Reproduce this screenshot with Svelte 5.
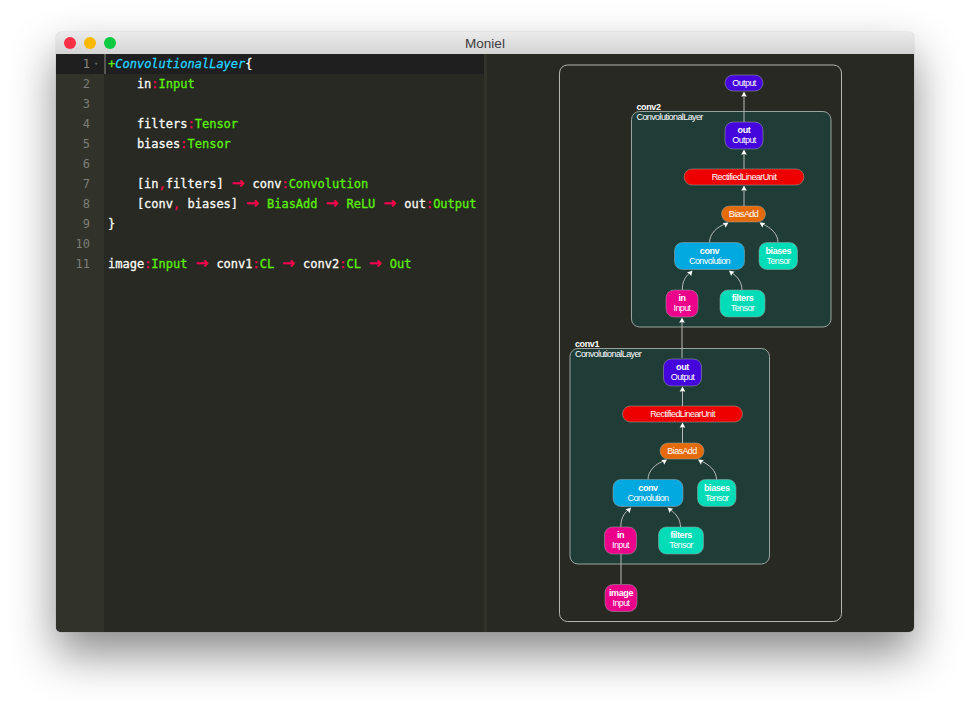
<script>
  const lines = [
    [['p','+'],['t','ConvolutionalLayer'],['w','{']],
    [['w','    in'],['r',':'],['g','Input']],
    [],
    [['w','    filters'],['r',':'],['g','Tensor']],
    [['w','    biases'],['r',':'],['g','Tensor']],
    [],
    [['w','    [in'],['r',','],['w','filters] '],['a','→'],['w',' conv'],['r',':'],['g','Convolution']],
    [['w','    [conv'],['r',','],['w',' biases] '],['a','→'],['g',' BiasAdd '],['a','→'],['g',' ReLU '],['a','→'],['w',' out'],['r',':'],['g','Output']],
    [['w','}']],
    [],
    [['w','image'],['r',':'],['g','Input '],['a','→'],['w',' conv1'],['r',':'],['g','CL '],['a','→'],['w',' conv2'],['r',':'],['g','CL '],['a','→'],['g',' Out']]
  ];

  const colors = {
    purple: '#4406dd', red: '#ee0000', orange: '#e56a09',
    blue: '#02a9e0', pink: '#ec018b', teal: '#00dcb8'
  };

  const layer = [
    { x: 93.5, y: 10.5, w: 38, h: 27, c: 'purple', a: 'out', b: 'Output' },
    { x: 52.5, y: 57.5, w: 120, h: 16, c: 'red', b: 'RectifiedLinearUnit' },
    { x: 90, y: 94.5, w: 44, h: 16, c: 'orange', b: 'BiasAdd' },
    { x: 43, y: 131, w: 70, h: 27, c: 'blue', a: 'conv', b: 'Convolution' },
    { x: 127.5, y: 131, w: 38.5, h: 27, c: 'teal', a: 'biases', b: 'Tensor' },
    { x: 34.5, y: 178.5, w: 32, h: 27, c: 'pink', a: 'in', b: 'Input' },
    { x: 88.5, y: 178.5, w: 45, h: 27, c: 'teal', a: 'filters', b: 'Tensor' }
  ];

  const layerEdges = [
    'M112.5 57.5V41', 'M112.5 94.5V77',
    'M78 131C78 122 86 115 94 112.5',
    'M146.5 131C146.5 122 139 116 131 112.5',
    'M50.8 178.5C50.8 170 54 165 58 161.5',
    'M110.5 178.5C110.5 171 106 165 100.5 161.5'
  ];

  const groups = [
    { x: 631.5, y: 111.5, id: 'conv2' },
    { x: 570, y: 348.5, id: 'conv1' }
  ];

  const straight = ['M744 122V95', 'M682 358V321', 'M621 584V531'];
  const tips = [[744, 91.5], [682, 317.5], [621, 527.5]];
</script>

<div class="page">
  <div class="window">
    <header class="titlebar">
      <div class="lights">
        <span class="light close"></span>
        <span class="light min"></span>
        <span class="light max"></span>
      </div>
      <span class="title">Moniel</span>
    </header>
    <div class="body">
      <section class="editor">
        <div class="gutter">
          {#each lines as _, i}
            <div class="num" class:active={i === 0}>{i + 1}<span class="fold">{i === 0 ? '▾' : ''}</span></div>
          {/each}
        </div>
        <div class="code">
          {#each lines as line, i}
            <div class="line" class:active={i === 0}>{#each line as [k, t]}<span class={k}>{t}</span>{/each}</div>
          {/each}
        </div>
      </section>
      <section class="graph">
        <svg width="427" height="578" viewBox="487 54 427 578">
          <rect class="outer" x="559.5" y="65" width="282" height="556.5" rx="8" />

          {#snippet arrow(x, y, rot = 0)}
            <path class="tip" d="M0 0L2.8 5.2L0 4.4L-2.8 5.2Z" transform="translate({x} {y}) rotate({rot})" />
          {/snippet}

          {#each groups as g}
            <rect class="group" x={g.x} y={g.y} width="199.5" height="215.5" rx="8" />
            <text class="bold" x={g.x + 5} y={g.y - 2}>{g.id}</text>
            <text class="thin" x={g.x + 5} y={g.y + 8.5}>ConvolutionalLayer</text>
            {#each layerEdges as d}
              <path class="edge" {d} transform="translate({g.x} {g.y})" />
            {/each}
            {@render arrow(g.x + 112.5, g.y + 38)}
            {@render arrow(g.x + 112.5, g.y + 74)}
            {@render arrow(g.x + 97, g.y + 111, 58)}
            {@render arrow(g.x + 128, g.y + 111, -58)}
            {@render arrow(g.x + 61, g.y + 159, 42)}
            {@render arrow(g.x + 97.5, g.y + 159, -50)}
          {/each}

          {#each straight as d}
            <path class="edge" {d} />
          {/each}
          {#each tips as [x, y]}
            {@render arrow(x, y)}
          {/each}

          <rect class="node" x="725" y="75" width="38" height="16" rx="8" fill={colors.purple} />
          <text class="thin mid" x="744" y="86.3">Output</text>

          {#each groups as g}
            {#each layer as n}
              <rect class="node" x={g.x + n.x} y={g.y + n.y} width={n.w} height={n.h} rx="8" fill={colors[n.c]} />
              {#if n.a}
                <text class="bold mid" x={g.x + n.x + n.w / 2} y={g.y + n.y + 11}>{n.a}</text>
                <text class="thin mid" x={g.x + n.x + n.w / 2} y={g.y + n.y + 21}>{n.b}</text>
              {:else}
                <text class="thin mid" x={g.x + n.x + n.w / 2} y={g.y + n.y + 11.3}>{n.b}</text>
              {/if}
            {/each}
          {/each}

          <rect class="node" x="605" y="584.5" width="32" height="27" rx="8" fill={colors.pink} />
          <text class="bold mid" x="621" y="595.5">image</text>
          <text class="thin mid" x="621" y="605.5">Input</text>
        </svg>
      </section>
    </div>
  </div>
</div>

<style>
  :global(body) {
    margin: 0;
    background: #fff;
  }
  .page {
    width: 970px;
    height: 712px;
    padding: 32px 56px 80px;
    box-sizing: border-box;
    overflow: hidden;
  }
  .window {
    width: 858px;
    height: 600px;
    border-radius: 5px;
    overflow: hidden;
    display: flex;
    flex-direction: column;
    box-shadow: 0 22px 46px rgba(0, 0, 0, 0.46), 0 0 1px rgba(0, 0, 0, 0.4);
  }
  .titlebar {
    height: 22px;
    flex: none;
    display: flex;
    align-items: center;
    justify-content: center;
    position: relative;
    background: linear-gradient(#ebebeb, #d4d4d4);
    font: 13.5px "Liberation Sans", Arial, sans-serif;
    color: #3c3c3c;
  }
  .lights {
    position: absolute;
    left: 8px;
    top: 5px;
    display: flex;
    gap: 8px;
  }
  .light {
    width: 12px;
    height: 12px;
    border-radius: 50%;
  }
  .close { background: #fc3045; }
  .min { background: #fdb800; }
  .max { background: #0ccb40; }
  .body {
    flex: 1;
    display: flex;
    min-height: 0;
    background: #272922;
  }
  .editor {
    width: 428px;
    display: flex;
    flex: none;
    font: 12px/20px "DejaVu Sans Mono", monospace;
    white-space: pre;
    -webkit-text-stroke: 0.3px currentColor;
  }
  .gutter {
    width: 48px;
    flex: none;
    background: #31332b;
    color: #7c7d76;
    -webkit-text-stroke: 0;
  }
  .num {
    height: 20px;
    padding-right: 14px;
    text-align: right;
    position: relative;
  }
  .num.active {
    background: #1f1f1f;
    color: #8a8a86;
  }
  .fold {
    position: absolute;
    left: 38px;
    top: 0;
    font-size: 7px;
    color: #666;
  }
  .code {
    flex: 1;
    min-width: 0;
    color: #f8f8f2;
  }
  .line {
    height: 20px;
    padding-left: 4px;
  }
  .line.active {
    background: #1f1f1f;
    box-shadow: inset 2px 0 #55564f;
  }
  .w { color: #fbfbf6; }
  .p { color: #5cf00a; font-style: italic; }
  .t { color: #22d4ff; font-style: italic; }
  .g { color: #5cf00a; }
  .r { color: #ff0050; }
  .a {
    display: inline-block;
    width: 14.45px;
    text-align: center;
    color: #ff0050;
    font-family: "DejaVu Sans", sans-serif;
    font-size: 15px;
    line-height: 0;
    -webkit-text-stroke: 0.5px currentColor;
  }
  .graph {
    flex: 1;
    border-left: 3px solid #31332b;
    min-width: 0;
  }
  svg {
    display: block;
  }
  .outer {
    fill: none;
    stroke: #b5b6b0;
    stroke-width: 1;
  }
  .group {
    fill: #1f3c36;
    stroke: #9aa39f;
    stroke-width: 1;
  }
  .node {
    stroke: #9aa39f;
    stroke-opacity: 0.7;
    stroke-width: 0.75;
  }
  .edge {
    fill: none;
    stroke: #b8bcb8;
    stroke-width: 1;
  }
  .tip {
    fill: #fff;
  }
  .bold, .thin {
    font-family: "Liberation Sans", Arial, sans-serif;
    font-size: 9px;
    fill: #fff;
    letter-spacing: -0.6px;
  }
  .bold {
    font-weight: 700;
    letter-spacing: -0.4px;
  }
  .mid {
    text-anchor: middle;
  }
</style>
